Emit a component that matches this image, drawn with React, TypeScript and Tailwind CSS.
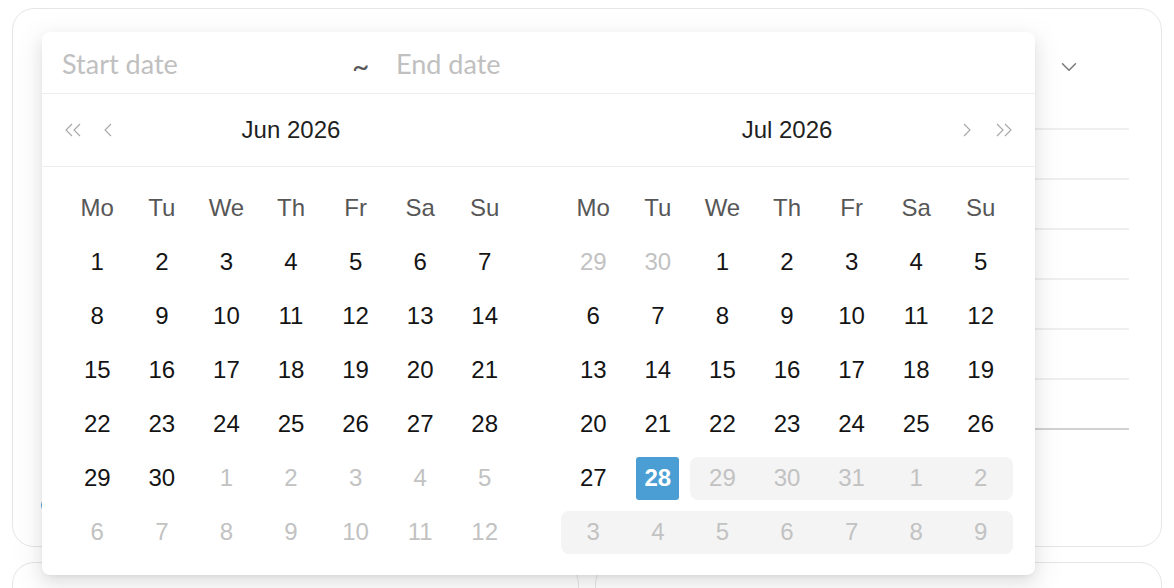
import { ChevronDown } from "lucide-react"

type Cell = {
  d: number
  muted?: boolean
  selected?: boolean
  range?: boolean
  rs?: boolean
  re?: boolean
}

const weekdays = ["Mo", "Tu", "We", "Th", "Fr", "Sa", "Su"]

function buildJune(): Cell[][] {
  const cells: Cell[] = []
  for (let i = 1; i <= 30; i++) cells.push({ d: i })
  for (let i = 1; i <= 12; i++) cells.push({ d: i, muted: true })
  const rows: Cell[][] = []
  for (let r = 0; r < 6; r++) rows.push(cells.slice(r * 7, r * 7 + 7))
  return rows
}

function buildJuly(): Cell[][] {
  const cells: Cell[] = [
    { d: 29, muted: true },
    { d: 30, muted: true },
  ]
  for (let i = 1; i <= 27; i++) cells.push({ d: i })
  cells.push({ d: 28, selected: true })
  for (let i = 29; i <= 31; i++) cells.push({ d: i, muted: true, range: true })
  for (let i = 1; i <= 9; i++) cells.push({ d: i, muted: true, range: true })
  const rows: Cell[][] = []
  for (let r = 0; r < 6; r++) {
    const row = cells.slice(r * 7, r * 7 + 7)
    const idx = row.map((c, i) => (c.range ? i : -1)).filter((i) => i >= 0)
    if (idx.length) {
      row[idx[0]].rs = true
      row[idx[idx.length - 1]].re = true
    }
    rows.push(row)
  }
  return rows
}

function DoubleLeft() {
  return (
    <svg width="18" height="14" viewBox="0 0 18 14" fill="none" stroke="#a6a6a6" strokeWidth="1.1">
      <path d="M8 1 L2 7 L8 13" />
      <path d="M16 1 L10 7 L16 13" />
    </svg>
  )
}

function SingleLeft() {
  return (
    <svg width="8" height="14" viewBox="0 0 8 14" fill="none" stroke="#a6a6a6" strokeWidth="1.1">
      <path d="M7 1 L1 7 L7 13" />
    </svg>
  )
}

function SingleRight() {
  return (
    <svg width="8" height="14" viewBox="0 0 8 14" fill="none" stroke="#a6a6a6" strokeWidth="1.1">
      <path d="M1 1 L7 7 L1 13" />
    </svg>
  )
}

function DoubleRight() {
  return (
    <svg width="18" height="14" viewBox="0 0 18 14" fill="none" stroke="#a6a6a6" strokeWidth="1.1">
      <path d="M2 1 L8 7 L2 13" />
      <path d="M10 1 L16 7 L10 13" />
    </svg>
  )
}

function Month({ rows }: { rows: Cell[][] }) {
  return (
    <div className="w-[452px]">
      <div className="grid grid-cols-7 h-[54px] items-center text-center text-[#575757]">
        {weekdays.map((w) => (
          <div key={w}>{w}</div>
        ))}
      </div>
      {rows.map((row, r) => (
        <div key={r} className="grid grid-cols-7 h-[54px] items-center text-center">
          {row.map((c, i) => (
            <div
              key={i}
              className={
                "h-[43px] flex items-center justify-center " +
                (c.range ? "bg-[#f4f4f4] " : "") +
                (c.rs ? "rounded-l-lg " : "") +
                (c.re ? "rounded-r-lg " : "")
              }
            >
              {c.selected ? (
                <span className="w-[43px] h-[43px] flex items-center justify-center rounded-[3px] bg-[#4b9ed4] text-white font-bold">
                  {c.d}
                </span>
              ) : (
                <span className={c.muted ? "text-[#c2c2c2]" : "text-[#141414]"}>{c.d}</span>
              )}
            </div>
          ))}
        </div>
      ))}
    </div>
  )
}

export default function App() {
  const june = buildJune()
  const july = buildJuly()

  return (
    <div className="relative w-[1174px] h-[588px] overflow-hidden bg-white px-3 pt-2 font-['Liberation_Sans',Arial,sans-serif]">
      {/* background card */}
      <div className="h-[539px] rounded-[22px] border border-[#e6e6e6] px-8">
        <div className="h-[121px] border-b-2 border-[#efefef] flex justify-end pt-[45px] pr-[47px]">
          <ChevronDown className="w-[26px] h-[26px] text-[#7a7a7a]" strokeWidth={1.4} />
        </div>
        {[0, 1, 2, 3, 4].map((i) => (
          <div key={i} className="h-[50px] border-b-2 border-[#efefef]" />
        ))}
        <div className="h-[50px] border-b-2 border-[#d2d2d2]" />
        <div className="pt-[68px] -ml-[4px]">
          <div className="w-[14px] h-[14px] rounded-full bg-[#4b9ed4]" />
        </div>
      </div>
      <div className="grid grid-cols-2 gap-4 mt-[15px]">
        <div className="h-[60px] rounded-[22px] border border-[#e6e6e6]" />
        <div className="h-[60px] rounded-[22px] border border-[#e6e6e6]" />
      </div>

      {/* date range popover */}
      <div className="absolute left-[42px] top-[32px] w-[993px] h-[543px] bg-white rounded-lg shadow-[0_6px_16px_0_rgba(0,0,0,0.08),0_3px_6px_-4px_rgba(0,0,0,0.12),0_9px_28px_8px_rgba(0,0,0,0.05)] text-[24px]">
        <div className="h-[62px] border-b border-[#ededed] flex items-center pl-5 pt-1 font-['Lato',sans-serif] text-[27px]">
          <span className="w-[290px] text-[#c0c0c0]">Start date</span>
          <span className="w-[44px] text-[#595959] text-[30px] leading-none">~</span>
          <span className="text-[#c0c0c0]">End date</span>
        </div>
        <div className="h-[73px] border-b border-[#ededed] flex gap-[44px] pl-[23px] pr-[22px]">
          <div className="w-[452px] grid grid-cols-[60px_1fr_60px] items-center">
            <div className="flex items-center gap-[22px] -ml-[1px]">
              <DoubleLeft />
              <SingleLeft />
            </div>
            <div className="text-center text-[#1f1f1f]">Jun 2026</div>
            <div />
          </div>
          <div className="w-[452px] grid grid-cols-[60px_1fr_60px] items-center">
            <div />
            <div className="text-center text-[#1f1f1f]">Jul 2026</div>
            <div className="flex items-center justify-end gap-[24px]">
              <SingleRight />
              <DoubleRight />
            </div>
          </div>
        </div>
        <div className="flex gap-[44px] pt-[14px] pl-[23px] pr-[22px]">
          <Month rows={june} />
          <Month rows={july} />
        </div>
      </div>
    </div>
  )
}
